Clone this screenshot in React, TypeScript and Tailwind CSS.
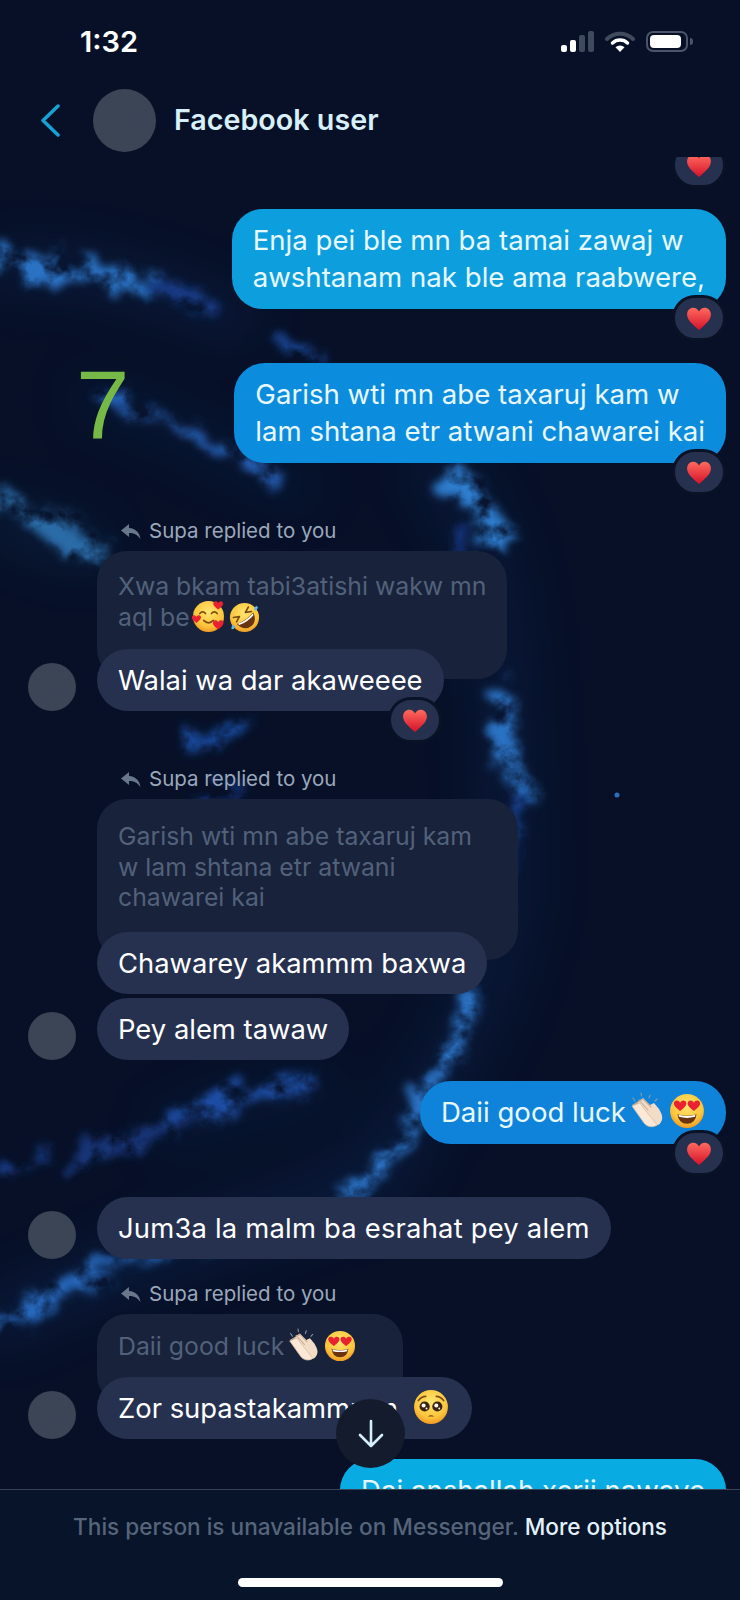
import type { ReactNode } from "react";

const font = "font-['Inter','Liberation_Sans',sans-serif]";

function Wallpaper() {
  return (
    <svg className="absolute inset-0" width="740" height="1600" viewBox="0 0 740 1600" fill="none">
      <defs>
        <filter id="smoke" x="-10%" y="-10%" width="120%" height="120%">
          <feTurbulence type="fractalNoise" baseFrequency="0.04" numOctaves="5" seed="11" result="noise" />
          <feDisplacementMap in="SourceGraphic" in2="noise" scale="42" xChannelSelector="R" yChannelSelector="G" result="moved" />
          <feGaussianBlur in="moved" stdDeviation="4" result="soft" />
          <feColorMatrix in="noise" type="matrix" values="0 0 0 0 0  0 0 0 0 0  0 0 0 0 0  2.6 0 0 0 -0.6" result="mask" />
          <feComposite in="soft" in2="mask" operator="in" />
        </filter>
        <filter id="haze" x="-20%" y="-20%" width="140%" height="140%">
          <feGaussianBlur stdDeviation="26" />
        </filter>
        <radialGradient id="face" cx="50%" cy="35%" r="70%">
          <stop offset="0%" stopColor="#ffe56f" />
          <stop offset="65%" stopColor="#fcc63c" />
          <stop offset="100%" stopColor="#ee8f1e" />
        </radialGradient>
        <linearGradient id="heart" x1="0" y1="0" x2="0" y2="1">
          <stop offset="0%" stopColor="#ff6a5e" />
          <stop offset="100%" stopColor="#d5122a" />
        </linearGradient>
      </defs>
      <g filter="url(#haze)" strokeLinecap="round" opacity="0.24">
        <path d="M0 270 C80 260 160 290 240 320" stroke="#123a7a" strokeWidth="40" />
        <path d="M440 470 C520 560 500 760 510 880 C500 1000 440 1080 360 1190" stroke="#0f2f68" strokeWidth="60" />
        <path d="M0 1320 C100 1270 240 1230 390 1170" stroke="#123a7a" strokeWidth="50" />
        <path d="M90 400 C170 420 240 460 300 490" stroke="#0f2f68" strokeWidth="36" />
        <path d="M0 520 L90 550" stroke="#134579" strokeWidth="40" />
        <path d="M170 1130 C220 1110 270 1100 320 1090" stroke="#0f2f68" strokeWidth="40" />
      </g>
      <g filter="url(#smoke)" strokeLinecap="round" strokeLinejoin="round">
        <path d="M0 260 C30 266 50 274 65 272 C90 264 125 272 150 288" stroke="#2a72c4" strokeWidth="26" />
        <path d="M160 288 C185 298 195 302 215 312" stroke="#143a84" strokeWidth="22" />
        <path d="M285 345 L325 360" stroke="#1c4fa8" strokeWidth="12" />
        <path d="M90 392 C130 400 190 428 225 448 C240 455 255 465 285 485" stroke="#2664bc" strokeWidth="12" />
        <path d="M0 505 C30 512 60 530 95 553" stroke="#2a6ca8" strokeWidth="24" />
        <path d="M455 480 C472 503 490 518 505 545" stroke="#2f7ed0" strokeWidth="24" />
        <path d="M470 540 L440 590" stroke="#143680" strokeWidth="16" />
        <path d="M505 695 C497 725 510 765 525 795" stroke="#2a72c4" strokeWidth="24" />
        <path d="M522 795 C515 830 505 860 500 910" stroke="#183f8c" strokeWidth="16" />
        <path d="M190 745 C205 735 220 730 240 726" stroke="#184698" strokeWidth="22" />
        <path d="M200 800 L240 786" stroke="#143680" strokeWidth="14" />
        <path d="M470 1000 C455 1040 440 1070 425 1100 C410 1140 385 1165 345 1195" stroke="#2a72c4" strokeWidth="18" />
        <path d="M175 1118 C220 1100 260 1090 305 1085" stroke="#1c4ea4" strokeWidth="22" />
        <path d="M70 1165 C110 1145 150 1135 185 1125" stroke="#123478" strokeWidth="18" />
        <path d="M0 1172 L45 1155" stroke="#133880" strokeWidth="14" />
        <path d="M0 1322 C40 1302 75 1285 105 1265 C150 1245 190 1240 240 1222" stroke="#2668bc" strokeWidth="22" />
      </g>
      <circle cx="617" cy="795" r="2.5" fill="#2a70c0" />
    </svg>
  );
}

function StatusBar() {
  return (
    <div className="relative flex h-[84px] items-start justify-between pl-[80px] pr-[47px] pt-[24px]">
      <span className="text-[29px] leading-[36px] font-semibold text-white">1:32</span>
      <div className="mt-[7px] flex items-center gap-[11px]">
        <svg width="33" height="21" viewBox="0 0 33 21">
          <rect x="0" y="14" width="6" height="7" rx="2" fill="#fff" />
          <rect x="9" y="9" width="6" height="12" rx="2" fill="#fff" />
          <rect x="18" y="4" width="6" height="17" rx="2" fill="#3f4a5c" />
          <rect x="27" y="0" width="6" height="21" rx="2" fill="#3f4a5c" />
        </svg>
        <svg width="30" height="21" viewBox="0 0 30 21" fill="none">
          <path d="M2 8 A 18.5 18.5 0 0 1 28 8" stroke="#3f4a5c" strokeWidth="4" strokeLinecap="round" />
          <path d="M7.5 12 A 11 11 0 0 1 22.5 12" stroke="#fff" strokeWidth="3.5" strokeLinecap="round" />
          <path d="M15 21 L10.5 16.2 A 6.5 6.5 0 0 1 19.5 16.2 Z" fill="#fff" />
        </svg>
        <div className="flex items-center">
          <div className="flex h-[21px] w-[42px] items-center rounded-[7px] border-2 border-[#4a5568] p-[2px]">
            <div className="h-full w-[31px] rounded-[4px] bg-white" />
          </div>
          <div className="ml-[2px] h-[7px] w-[3px] rounded-r-sm bg-[#4a5568]" />
        </div>
      </div>
    </div>
  );
}

function Header() {
  return (
    <div className="relative flex h-[73px] items-center pl-[40px]">
      <svg width="20" height="33" viewBox="0 0 20 33" fill="none">
        <path d="M18 2 L3 16.5 L18 31" stroke="#14a3d4" strokeWidth="3.5" strokeLinecap="round" strokeLinejoin="round" />
      </svg>
      <div className="ml-[33px] h-[63px] w-[63px] rounded-full bg-[#3b4556]" />
      <span className="mt-[-2px] ml-[18px] text-[28.7px] font-semibold text-[#d8f0fa]">Facebook user</span>
    </div>
  );
}

function HeartBadge({ className }: { className: string }) {
  return (
    <div className={`absolute flex h-[46px] w-[54px] items-center justify-center rounded-full border-[3px] border-[#0a1226] bg-[#26304f] ${className}`}>
      <svg width="26" height="25" viewBox="0 0 24 23">
        <path
          d="M12 22 C5 16 1 12.5 1 7.5 C1 4 3.8 1.5 6.8 1.5 C9 1.5 11 2.8 12 5 C13 2.8 15 1.5 17.2 1.5 C20.2 1.5 23 4 23 7.5 C23 12.5 19 16 12 22Z"
          fill="url(#heart)"
        />
      </svg>
    </div>
  );
}

function Outgoing({ color, className, children, heart = true }: { color: string; className?: string; children: ReactNode; heart?: boolean }) {
  return (
    <div className={`flex justify-end pr-[14px] ${className ?? ""}`}>
      <div className={`relative rounded-[31px] px-[21px] py-[13px] text-[27.6px] leading-[37px] whitespace-nowrap text-[#e8f8ff] ${color}`}>
        {children}
        {heart ? <HeartBadge className="right-0 bottom-[-32px]" /> : null}
      </div>
    </div>
  );
}

function Incoming({ className, avatar = true, children, heart }: { className?: string; avatar?: boolean; children: ReactNode; heart?: boolean }) {
  return (
    <div className={`relative flex items-end pl-[28px] ${className ?? ""}`}>
      {avatar ? <div className="h-[48px] w-[48px] rounded-full bg-[#3b4556]" /> : <div className="w-[48px]" />}
      <div className="relative ml-[21px] rounded-[31px] bg-[#263150] px-[21px] py-[12px] text-[27.4px] leading-[38px] whitespace-nowrap text-white">
        {children}
        {heart ? <HeartBadge className="right-[2px] bottom-[-32px]" /> : null}
      </div>
    </div>
  );
}

function RepliedLabel({ className }: { className: string }) {
  return (
    <div className={`flex h-[24px] items-center pl-[121px] text-[20.5px] text-[#9aa8ba] ${className}`}>
      <svg width="20" height="15" viewBox="0 0 20 15" fill="#69778a">
        <path d="M8 0 L0 6.5 L8 13 V9 C13 9 16 10.5 19.5 15 C18.5 8.5 14.5 4.5 8 4 Z" />
      </svg>
      <span className="ml-[8px]">Supa replied to you</span>
    </div>
  );
}

function Quoted({ className, children }: { className: string; children: ReactNode }) {
  return (
    <div className={`ml-[97px] rounded-[30px] bg-[#18223a] px-[21px] text-[24.8px] leading-[30.5px] whitespace-nowrap text-[#52617a] ${className}`}>{children}</div>
  );
}

// negative margins keep the emoji from stretching the line box
function Face({ size = 36, gap = "ml-[3px]", children }: { size?: number; gap?: string; children: ReactNode }) {
  return (
    <svg className={`my-[-8px] inline-block align-[1px] ${gap}`} width={size} height={size} viewBox="0 0 34 34">
      <circle cx="17" cy="17" r="16" fill="url(#face)" />
      {children}
    </svg>
  );
}

function MiniHeart({ x, y, s = 1 }: { x: number; y: number; s?: number }) {
  return (
    <path
      transform={`translate(${x} ${y}) scale(${s})`}
      d="M0 3 C-4 0 -4.5 -1.5 -3.5 -3 C-2.5 -4 -0.8 -3.8 0 -2.2 C0.8 -3.8 2.5 -4 3.5 -3 C4.5 -1.5 4 0 0 3Z"
      fill="#e8222f"
    />
  );
}

function SmilingHearts() {
  return (
    <Face size={33} gap="ml-[2px]">
      <path d="M8 14 Q11 10.5 14 14 M20 14 Q23 10.5 26 14" stroke="#7a4a12" strokeWidth="1.6" fill="none" strokeLinecap="round" />
      <path d="M12 21 Q17 26 22 21" stroke="#7a4a12" strokeWidth="1.6" fill="none" strokeLinecap="round" />
      <MiniHeart x={27} y={6} s={1.3} />
      <MiniHeart x={4.5} y={20} s={1.2} />
      <MiniHeart x={27} y={26} s={1.4} />
    </Face>
  );
}

function RollingLaugh() {
  return (
    <Face size={31} gap="ml-[4px]">
      <g transform="rotate(-35 17 17)">
        <path d="M7 10 L13 13 L7 16 M27 10 L21 13 L27 16" stroke="#7a4a12" strokeWidth="1.8" fill="none" strokeLinejoin="round" strokeLinecap="round" />
        <path d="M6 18 Q17 21 28 18 Q26 29 17 29 Q8 29 6 18Z" fill="#6b3410" />
        <path d="M7 18.5 Q17 21 27 18.5 L26.5 20.5 Q17 23 7.5 20.5Z" fill="#fff" />
      </g>
      <path d="M30 4 Q27 6 28 9 Q31 9 32 6Z M4 25 Q2 28 3 30 Q6 30 7 27Z" fill="#5cb6e8" />
    </Face>
  );
}

function HeartEyes({ size = 36 }: { size?: number }) {
  return (
    <Face size={size}>
      <MiniHeart x={10.5} y={12.5} s={1.5} />
      <MiniHeart x={23.5} y={12.5} s={1.5} />
      <path d="M8 20 Q17 23 26 20 Q25 29 17 29 Q9 29 8 20Z" fill="#6b3410" />
      <path d="M9 20.5 Q17 23 25 20.5 L24.6 22.5 Q17 24.5 9.4 22.5Z" fill="#fff" />
    </Face>
  );
}

function Pleading() {
  return (
    <Face gap="ml-[7px] mr-[2px]">
      <path d="M5 11 Q8 7 12 7 M29 11 Q26 7 22 7" stroke="#7a4a12" strokeWidth="1.5" fill="none" strokeLinecap="round" />
      <circle cx="11" cy="16.5" r="4.8" fill="#3a2410" />
      <circle cx="23" cy="16.5" r="4.8" fill="#3a2410" />
      <circle cx="10" cy="15.5" r="1.9" fill="#fff" />
      <circle cx="22" cy="15.5" r="1.9" fill="#fff" />
      <circle cx="12.8" cy="18.4" r="0.9" fill="#fff" />
      <circle cx="24.8" cy="18.4" r="0.9" fill="#fff" />
      <path d="M14 26 Q17 23.5 20 26Z" fill="#7a3a12" />
    </Face>
  );
}

function Clap({ size = 38 }: { size?: number }) {
  return (
    <svg className="my-[-8px] ml-[2px] inline-block align-[0px]" width={size} height={size} viewBox="0 0 38 38" fill="none">
      <path d="M7 13 L19 29 C22 34 30 36 33 30 C36 25 33 21 31 17 L26 11 L22 13 L15 6 L12 8 Z" fill="#f3dcc6" />
      <path d="M5 13 C9 11 13 8 15 7 L23 15 M11 8 L20 18 M9 11 L18 21 M6 15 L16 25" stroke="#c9ac92" strokeWidth="1.1" strokeLinecap="round" />
      <path d="M4 14 L16 31 C19 35 25 36 29 33 C25 27 18 20 12 11Z" fill="#fbe8d6" stroke="#d8bea6" strokeWidth="0.8" />
      <path d="M5 6 L7 9 M13 1 L13.5 4 M22 3 L21 6 M29 7 L27 9" stroke="#8c9aa8" strokeWidth="1.1" strokeLinecap="round" />
    </svg>
  );
}

export default function App() {
  return (
    <div className={`relative flex h-[1600px] w-[740px] flex-col overflow-hidden bg-[#071027] ${font}`}>
      <Wallpaper />
      <StatusBar />
      <Header />

      <div className="relative min-h-0 flex-1 overflow-hidden">
        <div className="relative h-[28px]">
          <HeartBadge className="right-[14px] bottom-[-3px]" />
        </div>

        <Outgoing color="bg-[#0d9fdd]" className="mt-[24px]">
          Enja pei ble mn ba tamai zawaj w
          <br />
          awshtanam nak ble ama raabwere,
        </Outgoing>
        <Outgoing color="bg-[#0c8cdd]" className="mt-[54px]">
          Garish wti mn abe taxaruj kam w
          <br />
          lam shtana etr atwani chawarei kai
        </Outgoing>

        <RepliedLabel className="mt-[56px]" />
        <Quoted className="mt-[8px] h-[128px] w-[410px] pt-[20px]">
          Xwa bkam tabi3atishi wakw mn
          <br />
          aql be
          <SmilingHearts />
          <RollingLaugh />
        </Quoted>
        <Incoming className="mt-[-30px]" heart>
          Walai wa dar akaweeee
        </Incoming>

        <RepliedLabel className="mt-[56px]" />
        <Quoted className="mt-[8px] h-[161px] w-[421px] pt-[22px]">
          Garish wti mn abe taxaruj kam
          <br />
          w lam shtana etr atwani
          <br />
          chawarei kai
        </Quoted>
        <Incoming className="mt-[-28px]" avatar={false}>
          Chawarey akammm baxwa
        </Incoming>
        <Incoming className="mt-[4px]">Pey alem tawaw</Incoming>

        <Outgoing color="bg-[#0e83d9]" className="mt-[21px]">
          Daii good luck
          <Clap />
          <HeartEyes />
        </Outgoing>

        <Incoming className="mt-[53px]">
          <span className="tracking-[0.2px]">Jum3a la malm ba esrahat pey alem</span>
        </Incoming>

        <RepliedLabel className="mt-[23px]" />
        <Quoted className="mt-[8px] h-[91px] w-[306px] pt-[17px]">
          Daii good luck
          <Clap size={35} />
          <HeartEyes size={32} />
        </Quoted>
        <Incoming className="mt-[-28px]">
          Zor supastakammmm <Pleading />
        </Incoming>

        <Outgoing color="bg-[#08ace3]" className="mt-[20px]" heart={false}>
          Dai anshallah xerii nawaye
        </Outgoing>

        <button className="absolute top-[1242px] left-[336px] flex h-[69px] w-[69px] items-center justify-center rounded-full bg-[#141b2d]">
          <svg width="28" height="30" viewBox="0 0 28 30" fill="none">
            <path d="M14 2 V27 M3 16 L14 27 L25 16" stroke="#d5eef8" strokeWidth="2.6" strokeLinecap="round" strokeLinejoin="round" />
          </svg>
        </button>
      </div>

      <div className="relative flex h-[111px] flex-col items-center border-t border-[#3a4456] bg-[#07142a]">
        <p className="mt-[24px] text-[22.6px] leading-[26px] font-medium text-[#56657a]">
          This person is unavailable on Messenger. <span className="text-[#e3f2fa]">More options</span>
        </p>
        <div className="mt-[38px] h-[9px] w-[265px] rounded-full bg-white" />
      </div>

      <span className="absolute top-[350px] left-[76px] font-['Liberation_Sans',sans-serif] text-[96px] leading-[110px] text-[#76b947]">7</span>
    </div>
  );
}
